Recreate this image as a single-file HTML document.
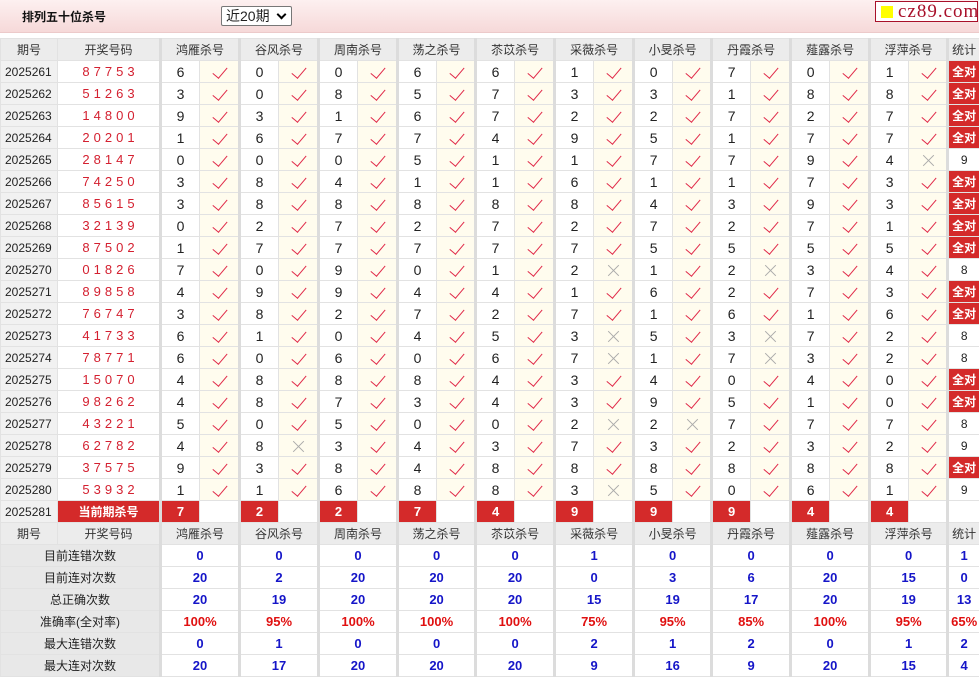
<!DOCTYPE html>
<html><head><meta charset="utf-8"><style>
*{margin:0;padding:0;box-sizing:border-box}
body{width:979px;height:675px;overflow:hidden;background:#fff;font-family:"Liberation Sans","Noto Sans CJK SC",sans-serif;font-size:13px;color:#222;position:relative}
.top{position:absolute;left:0;top:0;width:979px;height:33px;background:linear-gradient(#fdf0f0,#f6d9d9);border-bottom:1px solid #eccaca}
.title{position:absolute;left:22px;top:8px;font-size:12px;font-weight:bold;color:#111}
.sel{position:absolute;left:221px;top:6px;width:71px;height:20px;border:1px solid #777;background:#fff;font-size:14px;padding-left:4px;line-height:18px;border-radius:2px}
.sel i{position:absolute;right:6px;top:4px;width:7px;height:7px;border-right:2px solid #000;border-bottom:2px solid #000;transform:rotate(45deg)}
.logo{position:absolute;left:875px;top:1px;width:103px;height:21px;background:#fff;border:1px solid #a8102a;font-family:"Liberation Serif",serif;font-size:19px;color:#a8102a;line-height:19px;padding-left:22px;letter-spacing:1px}
.logo b{position:absolute;left:5px;top:4px;width:12px;height:12px;background:#ff0}
table{position:absolute;left:0;top:38px;border-collapse:collapse;table-layout:fixed;width:979px}
td{height:22px;border:1px solid #e2e2e2;text-align:center;white-space:nowrap;overflow:hidden;padding:0;position:relative;font-size:14px}
tr.h td{background:#ececec;color:#333;font-size:12px}
td.p{background:#f1f1f1;font-size:12px;text-align:left;padding-left:4px}
td.k{color:#d42030;letter-spacing:4px;font-size:13px;padding-left:4px}
td.n{border-left:3px solid #dcdcdc}
td.y,td.x{background:#fffcee}
td.y::after{content:"";position:absolute;left:50%;top:3px;width:7px;height:13px;margin-left:-3px;border-right:1.7px solid #e02848;border-bottom:1.7px solid #e02848;transform:rotate(40deg)}
td.x::before,td.x::after{content:"";position:absolute;left:50%;top:50%;width:15px;height:1px;margin-left:-7px;background:#aaa;transform:rotate(45deg)}
td.x::after{transform:rotate(-45deg)}
td.q{background:#d42a2a;color:#fff;font-weight:bold;font-size:12px}
td.r{background:#d42a2a;color:#fff;font-weight:bold;font-size:13px}
td.s{font-size:12px}
td.l{background:#e8e8e8;font-size:12px}
td.b{color:#1515c8;font-weight:bold;font-size:13px}
td.rd{color:#e01010;font-weight:bold;font-size:13px}
</style></head><body>
<div class="top"><div class="title">排列五十位杀号</div><div class="sel">近20期<i></i></div></div>
<div class="logo"><b></b>cz89.com</div>
<table>
<colgroup><col style="width:57px"><col style="width:103px"><col style="width:39px"><col style="width:40px"><col style="width:39px"><col style="width:40px"><col style="width:39px"><col style="width:40px"><col style="width:39px"><col style="width:39px"><col style="width:39px"><col style="width:40px"><col style="width:39px"><col style="width:40px"><col style="width:39px"><col style="width:39px"><col style="width:39px"><col style="width:40px"><col style="width:39px"><col style="width:40px"><col style="width:39px"><col style="width:39px"><col style="width:32px"></colgroup>
<tr class="h"><td>期号</td><td>开奖号码</td><td class="n" colspan="2">鸿雁杀号</td><td class="n" colspan="2">谷风杀号</td><td class="n" colspan="2">周南杀号</td><td class="n" colspan="2">荡之杀号</td><td class="n" colspan="2">苶苡杀号</td><td class="n" colspan="2">采薇杀号</td><td class="n" colspan="2">小旻杀号</td><td class="n" colspan="2">丹霞杀号</td><td class="n" colspan="2">薤露杀号</td><td class="n" colspan="2">浮萍杀号</td><td class="n">统计</td></tr>
<tr><td class="p">2025261</td><td class="k">87753</td><td class="n">6</td><td class="y"></td><td class="n">0</td><td class="y"></td><td class="n">0</td><td class="y"></td><td class="n">6</td><td class="y"></td><td class="n">6</td><td class="y"></td><td class="n">1</td><td class="y"></td><td class="n">0</td><td class="y"></td><td class="n">7</td><td class="y"></td><td class="n">0</td><td class="y"></td><td class="n">1</td><td class="y"></td><td class="n q">全对</td></tr>
<tr><td class="p">2025262</td><td class="k">51263</td><td class="n">3</td><td class="y"></td><td class="n">0</td><td class="y"></td><td class="n">8</td><td class="y"></td><td class="n">5</td><td class="y"></td><td class="n">7</td><td class="y"></td><td class="n">3</td><td class="y"></td><td class="n">3</td><td class="y"></td><td class="n">1</td><td class="y"></td><td class="n">8</td><td class="y"></td><td class="n">8</td><td class="y"></td><td class="n q">全对</td></tr>
<tr><td class="p">2025263</td><td class="k">14800</td><td class="n">9</td><td class="y"></td><td class="n">3</td><td class="y"></td><td class="n">1</td><td class="y"></td><td class="n">6</td><td class="y"></td><td class="n">7</td><td class="y"></td><td class="n">2</td><td class="y"></td><td class="n">2</td><td class="y"></td><td class="n">7</td><td class="y"></td><td class="n">2</td><td class="y"></td><td class="n">7</td><td class="y"></td><td class="n q">全对</td></tr>
<tr><td class="p">2025264</td><td class="k">20201</td><td class="n">1</td><td class="y"></td><td class="n">6</td><td class="y"></td><td class="n">7</td><td class="y"></td><td class="n">7</td><td class="y"></td><td class="n">4</td><td class="y"></td><td class="n">9</td><td class="y"></td><td class="n">5</td><td class="y"></td><td class="n">1</td><td class="y"></td><td class="n">7</td><td class="y"></td><td class="n">7</td><td class="y"></td><td class="n q">全对</td></tr>
<tr><td class="p">2025265</td><td class="k">28147</td><td class="n">0</td><td class="y"></td><td class="n">0</td><td class="y"></td><td class="n">0</td><td class="y"></td><td class="n">5</td><td class="y"></td><td class="n">1</td><td class="y"></td><td class="n">1</td><td class="y"></td><td class="n">7</td><td class="y"></td><td class="n">7</td><td class="y"></td><td class="n">9</td><td class="y"></td><td class="n">4</td><td class="x"></td><td class="n s">9</td></tr>
<tr><td class="p">2025266</td><td class="k">74250</td><td class="n">3</td><td class="y"></td><td class="n">8</td><td class="y"></td><td class="n">4</td><td class="y"></td><td class="n">1</td><td class="y"></td><td class="n">1</td><td class="y"></td><td class="n">6</td><td class="y"></td><td class="n">1</td><td class="y"></td><td class="n">1</td><td class="y"></td><td class="n">7</td><td class="y"></td><td class="n">3</td><td class="y"></td><td class="n q">全对</td></tr>
<tr><td class="p">2025267</td><td class="k">85615</td><td class="n">3</td><td class="y"></td><td class="n">8</td><td class="y"></td><td class="n">8</td><td class="y"></td><td class="n">8</td><td class="y"></td><td class="n">8</td><td class="y"></td><td class="n">8</td><td class="y"></td><td class="n">4</td><td class="y"></td><td class="n">3</td><td class="y"></td><td class="n">9</td><td class="y"></td><td class="n">3</td><td class="y"></td><td class="n q">全对</td></tr>
<tr><td class="p">2025268</td><td class="k">32139</td><td class="n">0</td><td class="y"></td><td class="n">2</td><td class="y"></td><td class="n">7</td><td class="y"></td><td class="n">2</td><td class="y"></td><td class="n">7</td><td class="y"></td><td class="n">2</td><td class="y"></td><td class="n">7</td><td class="y"></td><td class="n">2</td><td class="y"></td><td class="n">7</td><td class="y"></td><td class="n">1</td><td class="y"></td><td class="n q">全对</td></tr>
<tr><td class="p">2025269</td><td class="k">87502</td><td class="n">1</td><td class="y"></td><td class="n">7</td><td class="y"></td><td class="n">7</td><td class="y"></td><td class="n">7</td><td class="y"></td><td class="n">7</td><td class="y"></td><td class="n">7</td><td class="y"></td><td class="n">5</td><td class="y"></td><td class="n">5</td><td class="y"></td><td class="n">5</td><td class="y"></td><td class="n">5</td><td class="y"></td><td class="n q">全对</td></tr>
<tr><td class="p">2025270</td><td class="k">01826</td><td class="n">7</td><td class="y"></td><td class="n">0</td><td class="y"></td><td class="n">9</td><td class="y"></td><td class="n">0</td><td class="y"></td><td class="n">1</td><td class="y"></td><td class="n">2</td><td class="x"></td><td class="n">1</td><td class="y"></td><td class="n">2</td><td class="x"></td><td class="n">3</td><td class="y"></td><td class="n">4</td><td class="y"></td><td class="n s">8</td></tr>
<tr><td class="p">2025271</td><td class="k">89858</td><td class="n">4</td><td class="y"></td><td class="n">9</td><td class="y"></td><td class="n">9</td><td class="y"></td><td class="n">4</td><td class="y"></td><td class="n">4</td><td class="y"></td><td class="n">1</td><td class="y"></td><td class="n">6</td><td class="y"></td><td class="n">2</td><td class="y"></td><td class="n">7</td><td class="y"></td><td class="n">3</td><td class="y"></td><td class="n q">全对</td></tr>
<tr><td class="p">2025272</td><td class="k">76747</td><td class="n">3</td><td class="y"></td><td class="n">8</td><td class="y"></td><td class="n">2</td><td class="y"></td><td class="n">7</td><td class="y"></td><td class="n">2</td><td class="y"></td><td class="n">7</td><td class="y"></td><td class="n">1</td><td class="y"></td><td class="n">6</td><td class="y"></td><td class="n">1</td><td class="y"></td><td class="n">6</td><td class="y"></td><td class="n q">全对</td></tr>
<tr><td class="p">2025273</td><td class="k">41733</td><td class="n">6</td><td class="y"></td><td class="n">1</td><td class="y"></td><td class="n">0</td><td class="y"></td><td class="n">4</td><td class="y"></td><td class="n">5</td><td class="y"></td><td class="n">3</td><td class="x"></td><td class="n">5</td><td class="y"></td><td class="n">3</td><td class="x"></td><td class="n">7</td><td class="y"></td><td class="n">2</td><td class="y"></td><td class="n s">8</td></tr>
<tr><td class="p">2025274</td><td class="k">78771</td><td class="n">6</td><td class="y"></td><td class="n">0</td><td class="y"></td><td class="n">6</td><td class="y"></td><td class="n">0</td><td class="y"></td><td class="n">6</td><td class="y"></td><td class="n">7</td><td class="x"></td><td class="n">1</td><td class="y"></td><td class="n">7</td><td class="x"></td><td class="n">3</td><td class="y"></td><td class="n">2</td><td class="y"></td><td class="n s">8</td></tr>
<tr><td class="p">2025275</td><td class="k">15070</td><td class="n">4</td><td class="y"></td><td class="n">8</td><td class="y"></td><td class="n">8</td><td class="y"></td><td class="n">8</td><td class="y"></td><td class="n">4</td><td class="y"></td><td class="n">3</td><td class="y"></td><td class="n">4</td><td class="y"></td><td class="n">0</td><td class="y"></td><td class="n">4</td><td class="y"></td><td class="n">0</td><td class="y"></td><td class="n q">全对</td></tr>
<tr><td class="p">2025276</td><td class="k">98262</td><td class="n">4</td><td class="y"></td><td class="n">8</td><td class="y"></td><td class="n">7</td><td class="y"></td><td class="n">3</td><td class="y"></td><td class="n">4</td><td class="y"></td><td class="n">3</td><td class="y"></td><td class="n">9</td><td class="y"></td><td class="n">5</td><td class="y"></td><td class="n">1</td><td class="y"></td><td class="n">0</td><td class="y"></td><td class="n q">全对</td></tr>
<tr><td class="p">2025277</td><td class="k">43221</td><td class="n">5</td><td class="y"></td><td class="n">0</td><td class="y"></td><td class="n">5</td><td class="y"></td><td class="n">0</td><td class="y"></td><td class="n">0</td><td class="y"></td><td class="n">2</td><td class="x"></td><td class="n">2</td><td class="x"></td><td class="n">7</td><td class="y"></td><td class="n">7</td><td class="y"></td><td class="n">7</td><td class="y"></td><td class="n s">8</td></tr>
<tr><td class="p">2025278</td><td class="k">62782</td><td class="n">4</td><td class="y"></td><td class="n">8</td><td class="x"></td><td class="n">3</td><td class="y"></td><td class="n">4</td><td class="y"></td><td class="n">3</td><td class="y"></td><td class="n">7</td><td class="y"></td><td class="n">3</td><td class="y"></td><td class="n">2</td><td class="y"></td><td class="n">3</td><td class="y"></td><td class="n">2</td><td class="y"></td><td class="n s">9</td></tr>
<tr><td class="p">2025279</td><td class="k">37575</td><td class="n">9</td><td class="y"></td><td class="n">3</td><td class="y"></td><td class="n">8</td><td class="y"></td><td class="n">4</td><td class="y"></td><td class="n">8</td><td class="y"></td><td class="n">8</td><td class="y"></td><td class="n">8</td><td class="y"></td><td class="n">8</td><td class="y"></td><td class="n">8</td><td class="y"></td><td class="n">8</td><td class="y"></td><td class="n q">全对</td></tr>
<tr><td class="p">2025280</td><td class="k">53932</td><td class="n">1</td><td class="y"></td><td class="n">1</td><td class="y"></td><td class="n">6</td><td class="y"></td><td class="n">8</td><td class="y"></td><td class="n">8</td><td class="y"></td><td class="n">3</td><td class="x"></td><td class="n">5</td><td class="y"></td><td class="n">0</td><td class="y"></td><td class="n">6</td><td class="y"></td><td class="n">1</td><td class="y"></td><td class="n s">9</td></tr>
<tr><td class="p">2025281</td><td class="q">当前期杀号</td><td class="n r">7</td><td></td><td class="n r">2</td><td></td><td class="n r">2</td><td></td><td class="n r">7</td><td></td><td class="n r">4</td><td></td><td class="n r">9</td><td></td><td class="n r">9</td><td></td><td class="n r">9</td><td></td><td class="n r">4</td><td></td><td class="n r">4</td><td></td><td class="n"></td></tr>
<tr class="h"><td>期号</td><td>开奖号码</td><td class="n" colspan="2">鸿雁杀号</td><td class="n" colspan="2">谷风杀号</td><td class="n" colspan="2">周南杀号</td><td class="n" colspan="2">荡之杀号</td><td class="n" colspan="2">苶苡杀号</td><td class="n" colspan="2">采薇杀号</td><td class="n" colspan="2">小旻杀号</td><td class="n" colspan="2">丹霞杀号</td><td class="n" colspan="2">薤露杀号</td><td class="n" colspan="2">浮萍杀号</td><td class="n">统计</td></tr>
<tr><td class="l" colspan="2">目前连错次数</td><td class="n b" colspan="2">0</td><td class="n b" colspan="2">0</td><td class="n b" colspan="2">0</td><td class="n b" colspan="2">0</td><td class="n b" colspan="2">0</td><td class="n b" colspan="2">1</td><td class="n b" colspan="2">0</td><td class="n b" colspan="2">0</td><td class="n b" colspan="2">0</td><td class="n b" colspan="2">0</td><td class="n b">1</td></tr>
<tr><td class="l" colspan="2">目前连对次数</td><td class="n b" colspan="2">20</td><td class="n b" colspan="2">2</td><td class="n b" colspan="2">20</td><td class="n b" colspan="2">20</td><td class="n b" colspan="2">20</td><td class="n b" colspan="2">0</td><td class="n b" colspan="2">3</td><td class="n b" colspan="2">6</td><td class="n b" colspan="2">20</td><td class="n b" colspan="2">15</td><td class="n b">0</td></tr>
<tr><td class="l" colspan="2">总正确次数</td><td class="n b" colspan="2">20</td><td class="n b" colspan="2">19</td><td class="n b" colspan="2">20</td><td class="n b" colspan="2">20</td><td class="n b" colspan="2">20</td><td class="n b" colspan="2">15</td><td class="n b" colspan="2">19</td><td class="n b" colspan="2">17</td><td class="n b" colspan="2">20</td><td class="n b" colspan="2">19</td><td class="n b">13</td></tr>
<tr><td class="l" colspan="2">准确率(全对率)</td><td class="n rd" colspan="2">100%</td><td class="n rd" colspan="2">95%</td><td class="n rd" colspan="2">100%</td><td class="n rd" colspan="2">100%</td><td class="n rd" colspan="2">100%</td><td class="n rd" colspan="2">75%</td><td class="n rd" colspan="2">95%</td><td class="n rd" colspan="2">85%</td><td class="n rd" colspan="2">100%</td><td class="n rd" colspan="2">95%</td><td class="n rd">65%</td></tr>
<tr><td class="l" colspan="2">最大连错次数</td><td class="n b" colspan="2">0</td><td class="n b" colspan="2">1</td><td class="n b" colspan="2">0</td><td class="n b" colspan="2">0</td><td class="n b" colspan="2">0</td><td class="n b" colspan="2">2</td><td class="n b" colspan="2">1</td><td class="n b" colspan="2">2</td><td class="n b" colspan="2">0</td><td class="n b" colspan="2">1</td><td class="n b">2</td></tr>
<tr><td class="l" colspan="2">最大连对次数</td><td class="n b" colspan="2">20</td><td class="n b" colspan="2">17</td><td class="n b" colspan="2">20</td><td class="n b" colspan="2">20</td><td class="n b" colspan="2">20</td><td class="n b" colspan="2">9</td><td class="n b" colspan="2">16</td><td class="n b" colspan="2">9</td><td class="n b" colspan="2">20</td><td class="n b" colspan="2">15</td><td class="n b">4</td></tr>
</table>
</body></html>
